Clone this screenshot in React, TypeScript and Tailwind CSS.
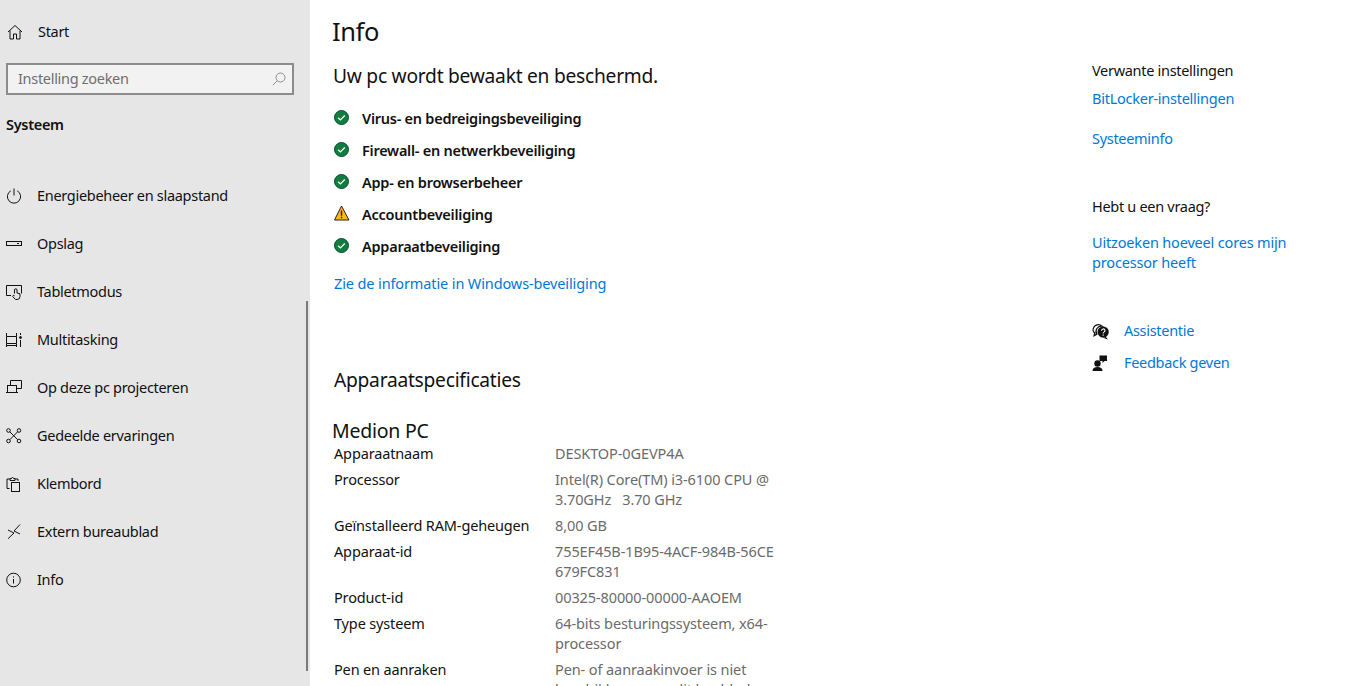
import type { ReactNode } from 'react';

const navItems: { label: string; icon: ReactNode }[] = [
  {
    label: 'Energiebeheer en slaapstand',
    icon: (
      <>
        <path d="M4.800 2.800A6.600 6.600 0 1 0 11.200 2.800" />
        <path d="M8 0.500v7" />
      </>
    ),
  },
  {
    label: 'Opslag',
    icon: (
      <>
        <rect x="0.500" y="5.500" width="15" height="4" />
        <path d="M11 7.500h2" />
      </>
    ),
  },
  {
    label: 'Tabletmodus',
    icon: (
      <>
        <path d="M5 11.500H0.500v-10h15v8" />
        <path d="M8.500 9.500V6a1.200 1.200 0 0 1 2.500 0v3l3 .8v2.700a3 3 0 0 1-3 3H9.500l-2.800-3 .6-1.200 1.200.4" />
      </>
    ),
  },
  {
    label: 'Multitasking',
    icon: (
      <>
        <path d="M0.500 1v3.500h10V1M0.500 4.500v7h10v-7M0.500 15v-3.500M10.500 15v-3.500M0.500 13.500h10" />
        <path d="M14.500 1v2M14.500 8v7" />
        <circle cx="14.500" cy="5.500" r="1" fill="currentColor" />
      </>
    ),
  },
  {
    label: 'Op deze pc projecteren',
    icon: (
      <>
        <path d="M4.500 5V0.500h11v8H11" />
        <rect x="1.500" y="5.500" width="9" height="7" />
        <path d="M0 12.500h12" />
      </>
    ),
  },
  {
    label: 'Gedeelde ervaringen',
    icon: (
      <>
        <circle cx="2.500" cy="2.500" r="1.800" />
        <circle cx="13" cy="2.500" r="1.800" />
        <circle cx="2.500" cy="13" r="1.800" />
        <circle cx="13" cy="13" r="1.800" />
        <path d="M3.800 3.800l7.900 7.900M11.700 3.800l-7.900 7.900" />
      </>
    ),
  },
  {
    label: 'Klembord',
    icon: (
      <>
        <path d="M3.500 12.500H1V3h3M9 3h3v2" />
        <path d="M4 4.500V2.500h1.500a1 1 0 0 1 2 0H9v2z" />
        <rect x="5.500" y="6.500" width="8" height="9" />
      </>
    ),
  },
  {
    label: 'Extern bureaublad',
    icon: <path d="M14 0.500L8 7l6 3M2 6l6 3-6 5.700" />,
  },
  {
    label: 'Info',
    icon: (
      <>
        <circle cx="7.500" cy="8" r="6.800" />
        <path d="M7.500 7v4.500" />
        <path d="M7.500 4.400v1.200" />
      </>
    ),
  },
];

const checks = [
  { label: 'Virus- en bedreigingsbeveiliging', warn: false },
  { label: 'Firewall- en netwerkbeveiliging', warn: false },
  { label: 'App- en browserbeheer', warn: false },
  { label: 'Accountbeveiliging', warn: true },
  { label: 'Apparaatbeveiliging', warn: false },
];

const specs = [
  { label: 'Apparaatnaam', value: ['DESKTOP-0GEVP4A'] },
  { label: 'Processor', value: ['Intel(R) Core(TM) i3-6100 CPU @', '3.70GHz   3.70 GHz'] },
  { label: 'Geïnstalleerd RAM-geheugen', value: ['8,00 GB'] },
  { label: 'Apparaat-id', value: ['755EF45B-1B95-4ACF-984B-56CE', '679FC831'] },
  { label: 'Product-id', value: ['00325-80000-00000-AAOEM'] },
  { label: 'Type systeem', value: ['64-bits besturingssysteem, x64-', 'processor'] },
  { label: 'Pen en aanraken', value: ['Pen- of aanraakinvoer is niet', 'beschikbaar voor dit beeldscherm'] },
];

const NavIcon = ({ children }: { children: ReactNode }) => (
  <svg viewBox="0 0 16 16" fill="none" stroke="currentColor" strokeWidth="1" className="h-4 w-4 shrink-0 text-[#111]">
    {children}
  </svg>
);

const StatusIcon = ({ warn }: { warn: boolean }) =>
  warn ? (
    <svg viewBox="0 0 16 16" className="h-4 w-4">
      <path d="M7.500 1L15 15H0.500z" fill="#fdb913" stroke="#222" strokeWidth="1" />
      <path d="M7.500 5.500v5.200M7.500 11.700v1.600" stroke="#222" strokeWidth="1.400" />
    </svg>
  ) : (
    <svg viewBox="0 0 16 16" className="h-4 w-4">
      <circle cx="7.500" cy="8.500" r="7" fill="#107c41" stroke="#0c4f2b" strokeWidth="1" />
      <path d="M4.100 8.700l2.300 2.200 4.400-4.400" fill="none" stroke="#fff" strokeWidth="1.200" />
    </svg>
  );

export default function App() {
  return (
    <div className="flex h-[686px] w-[1350px] overflow-hidden bg-white font-['Noto_Sans',sans-serif] text-[14.5px] tracking-[-0.3px] text-[#111]">
      <aside className="relative w-[310px] shrink-0 bg-[#e6e6e6] pt-2">
        <div className="flex h-12 items-center gap-[15px] pl-[7px]">
          <svg viewBox="0 0 16 16" fill="none" stroke="currentColor" className="h-4 w-4 text-[#111]">
            <path d="M1 8l7-6.500L15 8M3 6.500V15h3.500v-5h3v5H13V6.500" />
          </svg>
          <span>Start</span>
        </div>
        <div className="ml-[6px] mt-[7px] flex h-8 w-[288px] items-center justify-between border-2 border-[#8c8c8c] bg-[#f2f2f2] pl-[10px] pr-[6px] text-[#6f6f6f]">
          <span>Instelling zoeken</span>
          <svg viewBox="0 0 14 14" fill="none" stroke="currentColor" strokeWidth="0.800" className="h-[14px] w-[14px] text-[#777]">
            <circle cx="8.500" cy="5.500" r="4.500" />
            <path d="M5.200 8.800L0.800 13.200" />
          </svg>
        </div>
        <div className="ml-[6px] mt-[19px] text-[14.5px] font-semibold leading-5">Systeem</div>
        <nav className="mt-[38px]">
          {navItems.map((item) => (
            <div key={item.label} className="flex h-12 items-center gap-[15px] pl-[6px]">
              <NavIcon>{item.icon}</NavIcon>
              <span>{item.label}</span>
            </div>
          ))}
        </nav>
        <div className="absolute left-[306px] top-[301px] h-[370px] w-[2px] bg-[#7a7a7a]" />
      </aside>

      <main className="flex flex-1 pl-[22px]">
        <section className="w-[760px] shrink-0">
          <h1 className="mt-[12px] text-[25.5px] leading-[38px] tracking-[-0.4px]">Info</h1>
          <h2 className="ml-px mt-[12px] text-[19.2px] leading-[28px] tracking-[-0.25px]">Uw pc wordt bewaakt en beschermd.</h2>
          <ul className="ml-[2px] mt-[13px]">
            {checks.map((check) => (
              <li key={check.label} className="flex h-8 items-center gap-[12px] font-semibold tracking-[-0.25px]">
                <span className="-mt-[4px] flex">
                  <StatusIcon warn={check.warn} />
                </span>
                <span>{check.label}</span>
              </li>
            ))}
          </ul>
          <a className="ml-[2px] mt-[10px] block leading-5 tracking-[-0.12px] text-[#0078d7]">Zie de informatie in Windows-beveiliging</a>
          <h2 className="ml-[2px] mt-[73px] text-[19.2px] leading-[28px] tracking-[-0.25px]">Apparaatspecificaties</h2>
          <h3 className="mt-[24px] text-[19.5px] leading-[26px] tracking-[-0.25px]">Medion PC</h3>
          <dl className="ml-[2px] mt-[-1px] tracking-[-0.1px]">
            {specs.map((spec) => (
              <div key={spec.label} className="flex pb-[6px] leading-5">
                <dt className="w-[221px] shrink-0 tracking-[-0.15px]">{spec.label}</dt>
                <dd className="whitespace-pre text-[#6b6b6b]">
                  {spec.value.map((line) => (
                    <div key={line}>{line}</div>
                  ))}
                </dd>
              </div>
            ))}
          </dl>
        </section>

        <section className="pt-[60px]">
          <div className="leading-5">Verwante instellingen</div>
          <a className="mt-2 block leading-5 tracking-[-0.25px] text-[#0078d7]">BitLocker-instellingen</a>
          <a className="mt-5 block leading-5 text-[#0078d7]">Systeeminfo</a>
          <div className="mt-[48px] leading-5">Hebt u een vraag?</div>
          <a className="mt-[16px] block leading-5 tracking-[-0.17px] text-[#0078d7]">
            Uitzoeken hoeveel cores mijn
            <br />
            processor heeft
          </a>
          <div className="mt-[49px] flex h-5 items-center gap-[15px]">
            <svg viewBox="0 0 16 16" className="h-[17px] w-[17px] shrink-0">
              <path d="M1 7a5 5 0 0 1 5-5.500c1.500 0 2.500.5 3.500 1.500a5 5 0 0 0-5 7.500L2 12l.5-2.500A5 5 0 0 1 1 7z" fill="none" stroke="#111" strokeWidth="1.200" />
              <circle cx="10.500" cy="8.500" r="5.300" fill="#111" />
              <path d="M13 13l2 2.500-4-1.500z" fill="#111" />
              <path d="M9 7.200a1.600 1.600 0 1 1 2.300 1.400c-.6.3-.8.6-.8 1.200M10.500 10.800v1.200" fill="none" stroke="#fff" strokeWidth="1" />
            </svg>
            <a className="text-[#0078d7]">Assistentie</a>
          </div>
          <div className="mt-3 flex h-5 items-center gap-[16px]">
            <svg viewBox="0 0 16 16" className="h-4 w-4 shrink-0" fill="#111">
              <circle cx="5.500" cy="8.500" r="3.200" />
              <path d="M0.500 16c0-2.800 1.800-4 5-4s5 1.200 5 4z" />
              <path d="M7.500 0.500H15V6h-2.500L10.500 8V6h-3z" />
            </svg>
            <a className="text-[#0078d7]">Feedback geven</a>
          </div>
        </section>
      </main>
    </div>
  );
}
